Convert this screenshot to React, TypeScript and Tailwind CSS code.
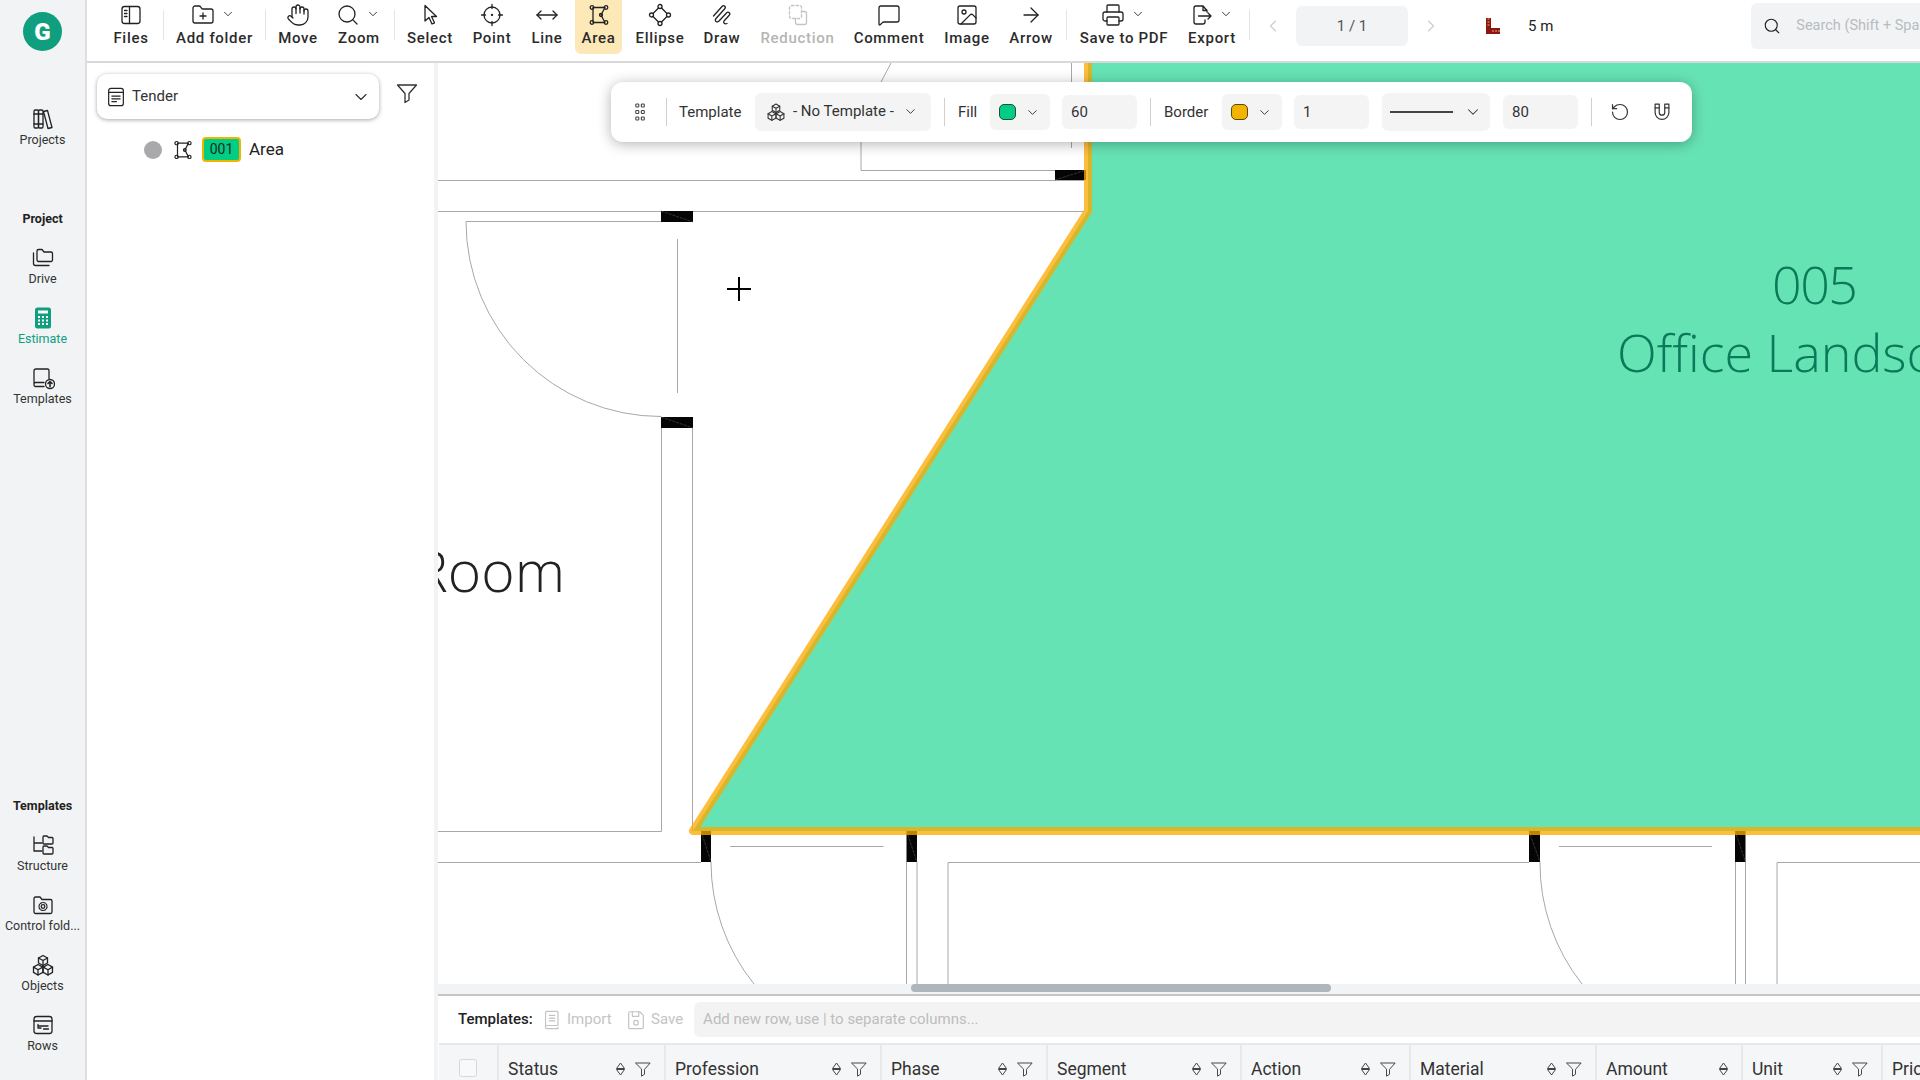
import React from 'react';
import { ChevronDown, ChevronLeft, ChevronRight, Search, Hand, MoveHorizontal, ArrowRight, Printer, FolderPlus, RotateCcw, Image as ImageIcon, MessageSquare } from 'lucide-react';

const ui = "font-['Roboto',sans-serif]";

// generic stroke icon wrapper
function Ico({ size = 24, children, className = '' }: { size?: number; children: React.ReactNode; className?: string }) {
  return (
    <svg width={size} height={size} viewBox="0 0 24 24" fill="none" stroke="currentColor" strokeWidth={1.3} strokeLinecap="round" strokeLinejoin="round" className={className}>
      {children}
    </svg>
  );
}

const FilesIcon = () => (
  <Ico>
    <rect x="3" y="3.5" width="18" height="17" rx="2.5" />
    <path d="M10.5 3.5v17M5.5 7.5h2.5M5.5 10.5h2.5M5.5 13.5h2.5" />
  </Ico>
);
const SelectIcon = () => (
  <Ico>
    <path d="M7 2.500v15.500l4-3.500 3 6.500 2.500-1.200-3-6.300h5z" />
  </Ico>
);
const PointIcon = () => (
  <Ico>
    <circle cx="12" cy="12" r="8" />
    <path d="M12 1.500v4M12 18.500v4M1.500 12h4M18.500 12h4" />
    <circle cx="12" cy="12" r="0.5" fill="currentColor" />
  </Ico>
);
const AreaIcon = ({ size = 24 }: { size?: number }) => (
  <Ico size={size}>
    <path d="M6 4.500h12l-4 7.500 4 7.500H6z" />
    <circle cx="5" cy="4.500" r="1.800" />
    <circle cx="19" cy="4.500" r="1.800" />
    <circle cx="5" cy="19.500" r="1.800" />
    <circle cx="19" cy="19.500" r="1.800" />
    <circle cx="14" cy="12" r="1.500" />
  </Ico>
);
const EllipseIcon = () => (
  <Ico>
    <path d="M12 3.500 20.500 12 12 20.500 3.500 12z" />
    <circle cx="12" cy="3.500" r="2" fill="white" />
    <circle cx="12" cy="20.500" r="2" fill="white" />
    <circle cx="3.500" cy="12" r="2" fill="white" />
    <circle cx="20.500" cy="12" r="2" fill="white" />
  </Ico>
);
const DrawIcon = () => (
  <Ico>
    <path d="M3.500 13 12 3.500c2-2 4.500.5 2.500 2.500L6 15.500c-2 2.500 1 4.500 3 2.500l7.500-8c2-2 4.500.5 2.500 2.500l-5 5.500c-1 1.500.5 3.500 3 2.500" />
  </Ico>
);
const ReductionIcon = () => (
  <Ico>
    <rect x="3.500" y="2.500" width="12" height="13" rx="2" strokeDasharray="2.500 2" />
    <path d="M15.500 8.500h3a2 2 0 0 1 2 2v9a2 2 0 0 1-2 2h-7a2 2 0 0 1-2-2v-4" />
  </Ico>
);
const ExportIcon = () => (
  <Ico>
    <path d="M14 3H7a2 2 0 0 0-2 2v14a2 2 0 0 0 2 2h7a2 2 0 0 0 2-2v-2M14 3l4 4.500V9M14 3v4.500h4M9.500 13H22M19 10l3 3-3 3" />
  </Ico>
);
const ProjectsIcon = () => (
  <Ico>
    <rect x="3" y="3" width="4.500" height="18" rx="1.200" />
    <rect x="7.500" y="3" width="4.500" height="18" rx="1.200" />
    <path d="M3 17h9M3 7h9M12.500 4.500l4-1 4.500 17-4 1z" />
  </Ico>
);
const DriveIcon = () => (
  <Ico>
    <path d="M6 7.500V5a1.500 1.500 0 0 1 1.500-1.500h3.500l2 2.500h7a1.500 1.500 0 0 1 1.500 1.500v6.500a1.500 1.500 0 0 1-1.500 1.500H7.500A1.500 1.500 0 0 1 6 14z" />
    <path d="M2.500 7v10.500a2 2 0 0 0 2 2H18" />
  </Ico>
);
const EstimateIcon = () => (
  <svg width="24" height="24" viewBox="0 0 24 24">
    <rect x="4" y="1.500" width="16" height="21" rx="2.500" fill="#0f9f7f" />
    <rect x="7" y="4.500" width="10" height="3" fill="white" />
    {[10, 13.5, 17].map((y) => [7, 11, 15].map((x) => <rect key={`${x}${y}`} x={x} y={y} width="2" height="2" fill="white" />))}
  </svg>
);
const TemplatesUpIcon = () => (
  <Ico>
    <path d="M13 20.500H4.500A1.500 1.500 0 0 1 3 19V5a2 2 0 0 1 2-2h11.500a1.500 1.500 0 0 1 1.500 1.500v8M3 18a1.500 1.500 0 0 1 1.500-1.500H13" />
    <circle cx="19" cy="18" r="4.500" />
    <path d="M19 20.500v-5M17 17.500l2-2 2 2" strokeWidth={1.6} />
  </Ico>
);
const StructureIcon = () => (
  <Ico>
    <path d="M3 4v14h8M3 10h8" />
    <path d="M12 5V4a1 1 0 0 1 1-1h3l1.500 1.500h3.500a1 1 0 0 1 1 1V10a1 1 0 0 1-1 1h-8a1 1 0 0 1-1-1z" />
    <path d="M12 15v-1a1 1 0 0 1 1-1h3l1.500 1.500h3.500a1 1 0 0 1 1 1V20a1 1 0 0 1-1 1h-8a1 1 0 0 1-1-1z" />
  </Ico>
);
const ControlIcon = () => (
  <Ico>
    <path d="M3 5.500A1.500 1.500 0 0 1 4.500 4H9l2 2.500h8.500A1.500 1.500 0 0 1 21 8v11a1.500 1.500 0 0 1-1.500 1.500h-15A1.500 1.500 0 0 1 3 19z" />
    <circle cx="12" cy="13.500" r="1.800" />
    <circle cx="12" cy="13.500" r="4" strokeDasharray="2 1.100" strokeWidth={1.2} />
  </Ico>
);
const ObjectsIcon = ({ size = 24 }: { size?: number }) => (
  <Ico size={size}>
    <path d="M12 2.500l4.500 2.500v5L12 12.500 7.500 10V5z" />
    <path d="M7.500 5l4.500 2.500L16.500 5M12 7.500v5" />
    <path d="M7 11.500l4.800 2.600v5.300L7 22l-4.500-2.600v-5.300z" />
    <path d="M2.500 14.100L7 16.700l4.800-2.600M7 16.700V22" />
    <path d="M17 11.500l4.500 2.600v5.300L17 22l-4.800-2.600v-5.300z" />
    <path d="M12.200 14.100l4.800 2.600 4.500-2.600M17 16.700V22" />
  </Ico>
);
const RowsIcon = () => (
  <Ico>
    <rect x="3" y="3.500" width="18" height="17" rx="2.500" />
    <path d="M3 8h18M7 11.500v3.500h3M7 13h10M12.500 16h5" />
  </Ico>
);
const TenderIcon = () => (
  <Ico size={22}>
    <rect x="4" y="2.500" width="16" height="19" rx="2.500" />
    <path d="M4 7h16M7.500 11h9M7.500 14h9M7.500 17h5" />
  </Ico>
);
const FilterIcon = ({ size = 24, className = '' }: { size?: number; className?: string }) => (
  <Ico size={size} className={className}>
    <path d="M2.500 4h19l-7.500 8.500v6.500l-4 2.500v-9z" />
  </Ico>
);
const BookIcon = () => (
  <Ico size={22}>
    <path d="M5 19.500V4a1.500 1.500 0 0 1 1.500-1.500H17A1.500 1.500 0 0 1 18.500 4v14H6.500a1.500 1.500 0 0 0 0 3.500H18.500v-1.500" />
    <path d="M9 7h6M9 10h6M9 13h6" />
  </Ico>
);
const SaveIcon = () => (
  <Ico size={22}>
    <path d="M5 3h11l4 4v13a1.500 1.500 0 0 1-1.500 1.500h-13A1.500 1.500 0 0 1 4 20V4.500A1.500 1.500 0 0 1 5 3z" />
    <path d="M8 3v5h7V3" />
    <circle cx="12" cy="15" r="2.500" />
  </Ico>
);
const MagnetIcon = () => (
  <Ico size={22} className="ml-[21px] text-[#333]">
    <path d="M4.500 3.500h4.500v9a3 3 0 0 0 6 0v-9h4.500v9a7.500 7.500 0 0 1-15 0z" />
    <path d="M4.500 7.500H9M15 7.500h4.500" />
  </Ico>
);
const SortIcon = () => (
  <svg width="11" height="14" viewBox="0 0 11 14" fill="none" stroke="#444" strokeWidth="1" strokeLinejoin="round">
    <path d="M5.500 1 9.500 6.500H1.500z" />
    <path d="M5.500 13 9.500 7.500H1.500z" />
  </svg>
);

function Tool({ label, w, children, chevron, active, disabled, mr }: { label: string; w: string; children: React.ReactNode; chevron?: boolean; active?: boolean; disabled?: boolean; mr?: string }) {
  return (
    <div className={`${w} ${mr ?? ''} h-[54px] flex flex-col items-center shrink-0 ${active ? 'bg-[#fde8b8] rounded-b-md' : ''}`}>
      <div className={`h-[30px] flex items-center justify-center gap-[6px] ${disabled ? 'text-[#c4c4c4]' : 'text-[#222]'} ${chevron ? '-ml-[3px]' : ''}`}>
        {children}
        {chevron && <ChevronDown size={14} strokeWidth={1.5} className="mb-[3px]" />}
      </div>
      <span className={`text-[15px] leading-[16px] font-medium tracking-[0.7px] whitespace-nowrap ${disabled ? 'text-[#b5b5b5]' : 'text-[#2b2b2b]'}`}>{label}</span>
    </div>
  );
}

const Sep = () => <div className="w-[1px] h-[30px] bg-[#e3e5e8] shrink-0 self-start mt-[10px]" />;

function TopBar() {
  const s = { size: 24, strokeWidth: 1.3 };
  return (
    <div className="h-[63px] shrink-0 flex items-start bg-white border-b-2 border-[#d9d9d9] pl-[12px] overflow-hidden">
      <Tool label="Files" w="w-[64px]"><FilesIcon /></Tool>
      <Sep />
      <Tool label="Add folder" w="w-[101px]" chevron><FolderPlus {...s} /></Tool>
      <Sep />
      <Tool label="Move" w="w-[64px]"><Hand {...s} /></Tool>
      <Tool label="Zoom" w="w-[58px]" mr="mr-[6px]" chevron><Search {...s} /></Tool>
      <Sep />
      <Tool label="Select" w="w-[70px]"><SelectIcon /></Tool>
      <Tool label="Point" w="w-[54px]"><PointIcon /></Tool>
      <Tool label="Line" w="w-[56px]"><MoveHorizontal {...s} /></Tool>
      <Tool label="Area" w="w-[47px]" active><AreaIcon /></Tool>
      <Tool label="Ellipse" w="w-[76px]"><EllipseIcon /></Tool>
      <Tool label="Draw" w="w-[48px]"><DrawIcon /></Tool>
      <Tool label="Reduction" w="w-[103px]" disabled><ReductionIcon /></Tool>
      <Tool label="Comment" w="w-[80px]"><MessageSquare {...s} /></Tool>
      <Tool label="Image" w="w-[76px]"><ImageIcon {...s} /></Tool>
      <Tool label="Arrow" w="w-[52px]" mr="mr-[9px]"><ArrowRight {...s} /></Tool>
      <Sep />
      <Tool label="Save to PDF" w="w-[114px]" chevron><Printer {...s} /></Tool>
      <Tool label="Export" w="w-[62px]" mr="mr-[6px]" chevron><ExportIcon /></Tool>
      <Sep />
      <div className="w-[46px] h-[52px] flex items-center justify-center shrink-0"><ChevronLeft size={20} strokeWidth={1.3} className="text-[#c8ccd0]" /></div>
      <div className="w-[112px] h-[40px] mt-[6px] bg-[#f1f3f5] rounded-md flex items-center justify-center text-[15px] text-[#555] shrink-0">1 / 1</div>
      <div className="w-[46px] h-[52px] flex items-center justify-center shrink-0"><ChevronRight size={20} strokeWidth={1.3} className="text-[#c8ccd0]" /></div>
      <div className="ml-[31px] h-[52px] flex items-center shrink-0">
        <svg width="16" height="16" viewBox="0 0 16 16">
          <path d="M1 0h5v10h9v6H1z" fill="#8f1511" />
          <path d="M1.500 2h2M1.500 5h2M1.500 8h2M7 13v2M10 13v2M13 13v2" stroke="#e9b56a" strokeWidth="1" transform="translate(1 -1)" />
        </svg>
      </div>
      <div className="ml-[27px] h-[52px] flex items-center text-[15px] text-[#222] shrink-0">5 m</div>
      <div className="ml-[198px] mt-[3px] h-[46px] w-[180px] shrink-0 bg-[#f1f3f5] rounded-l-md flex items-center pl-[12px] gap-[15px] overflow-hidden">
        <Search size={18} strokeWidth={1.5} className="text-[#222] shrink-0" />
        <span className="text-[14.5px] text-[#b8bcc0] whitespace-nowrap">Search (Shift + Space)</span>
      </div>
    </div>
  );
}

function RailItem({ label, children, active }: { label: string; children: React.ReactNode; active?: boolean }) {
  return (
    <div className="h-[60px] flex flex-col items-center justify-center shrink-0">
      <div className={`h-[24px] ${active ? '' : 'text-[#222]'}`}>{children}</div>
      <span className={`mt-[2px] text-[12.5px] leading-[14px] whitespace-nowrap ${active ? 'text-[#0f9f7f]' : 'text-[#333]'}`}>{label}</span>
    </div>
  );
}

function Rail() {
  return (
    <div className="w-[87px] shrink-0 h-full bg-[#f1f3f5] border-r-2 border-[#dcdee0] flex flex-col items-stretch">
      <div className="pt-[12px] flex justify-center h-[97px] shrink-0">
        <div className="w-[39px] h-[39px] rounded-full bg-[#0f9f7f] flex items-center justify-center text-white text-[24px] font-black leading-none">G</div>
      </div>
      <RailItem label="Projects"><ProjectsIcon /></RailItem>
      <div className="mt-[54px] mb-[9px] text-[12.5px] leading-[16px] font-bold text-center text-[#222]">Project</div>
      <RailItem label="Drive"><DriveIcon /></RailItem>
      <RailItem label="Estimate" active><EstimateIcon /></RailItem>
      <RailItem label="Templates"><TemplatesUpIcon /></RailItem>
      <div className="mt-auto mb-[9px] text-[12.5px] leading-[16px] font-bold text-center text-[#222]">Templates</div>
      <RailItem label="Structure"><StructureIcon /></RailItem>
      <RailItem label="Control fold..."><ControlIcon /></RailItem>
      <RailItem label="Objects"><ObjectsIcon /></RailItem>
      <div className="pb-[17px]"><RailItem label="Rows"><RowsIcon /></RailItem></div>
    </div>
  );
}

function SidePanel() {
  return (
    <div className="w-[351px] shrink-0 h-full bg-white border-r-4 border-[#f1f3f5] pl-[10px]">
      <div className="flex items-center mt-[11px]">
        <div className="w-[282px] h-[45px] rounded-[10px] bg-white shadow-[0_1px_4px_rgba(0,0,0,0.35)] flex items-center pl-[8px] pr-[8px]">
          <span className="text-[#222] mr-[5px]"><TenderIcon /></span>
          <span className="text-[15px] text-[#333] flex-1">Tender</span>
          <ChevronDown size={20} strokeWidth={1.4} className="text-[#333]" />
        </div>
        <FilterIcon size={24} className="ml-[16px] mb-[7px] text-[#333]" />
      </div>
      <div className="flex items-center mt-[18px] ml-[47px]">
        <div className="w-[18px] h-[18px] rounded-full bg-[#a9a9ab]" />
        <span className="ml-[10px] text-[#222]"><AreaIcon size={22} /></span>
        <div className="ml-[8px] w-[39px] h-[25px] rounded-[4px] bg-[#00ce84] border-2 border-[#f3b400] flex items-center justify-center text-[14px] text-[#1a2a24]">001</div>
        <span className="ml-[8px] text-[17px] text-[#222]">Area</span>
      </div>
    </div>
  );
}

function Block({ x, y, w, h, flip }: { x: number; y: number; w: number; h: number; flip?: boolean }) {
  return (
    <g>
      <rect x={x} y={y} width={w} height={h} fill="#050505" />
      <path d={flip ? `M${x} ${y + h}L${x + w} ${y}` : `M${x} ${y}L${x + w} ${y + h}`} stroke="#555" strokeWidth="0.6" strokeDasharray="3 1" />
    </g>
  );
}

// floor plan, viewBox uses page coordinates
function FloorPlan() {
  const lines = [
    'M438 180.500H1084', 'M438 211.500H1084',
    'M861 142V170.500H1056', 'M1071.500 63V84M1071.500 142V148', 'M891 63L881 82', 'M861 142L863 136',
    'M466 221.500H661', 'M466 221.500A195 195 0 0 0 661 416.500',
    'M677.500 239V393',
    'M661.500 428V831.500', 'M692.500 428V831',
    'M438 831.500H661.500', 'M438 862.500H701',
    'M730 846.500H883.500', 'M711 862A195 195 0 0 0 754 984',
    'M906.500 862V984', 'M917 862V984', 'M948 984V862.500H1529',
    'M1559 846.500H1712', 'M1540 862A195 195 0 0 0 1582 984',
    'M1735.500 862V984', 'M1745.500 862V984', 'M1777 984V862.500H1920',
  ];
  return (
    <svg className="absolute inset-0" width="1482" height="921" viewBox="438 63 1482 921">
      <g fill="none" stroke="#a8a8a8" strokeWidth="1">
        {lines.map((d) => <path key={d} d={d} />)}
      </g>
      <Block x={1055} y={170} w={31} h={10} flip />
      <Block x={661} y={211} w={32} h={11} />
      <Block x={661} y={417} w={32} h={11} />
      <Block x={701} y={831} w={10} h={31} />
      <Block x={906.5} y={831} w={10.5} h={31} />
      <Block x={1529} y={831} w={11} h={31} />
      <Block x={1735} y={831} w={10.5} h={31} />
      <path d="M1088 40V211L693 831H1950V40Z" fill="#66e3b5" stroke="#fca800" strokeOpacity="0.76" strokeWidth="8" strokeLinejoin="round" />
      <path d="M739 277V301M727 289H751" stroke="#000" strokeWidth="2" />
    </svg>
  );
}

const Pill = ({ className, children }: { className: string; children?: React.ReactNode }) => (
  <div className={`bg-[#f4f4f5] rounded-md flex items-center shrink-0 text-[15px] text-[#333] ${className}`}>{children}</div>
);
const VBar = ({ className = '' }: { className?: string }) => <div className={`w-[1px] h-[28px] bg-[#d0d0d0] shrink-0 ${className}`} />;

function AreaToolbar() {
  return (
    <div className={`absolute left-[173px] top-[19px] w-[1081px] h-[60px] bg-white rounded-[12px] shadow-[0_2px_14px_rgba(0,0,0,0.3)] flex items-center text-[15px] text-[#333] pl-[24px] ${ui}`}>
      <svg width="10" height="18" viewBox="0 0 10 18" fill="none" stroke="#444" strokeWidth="1.1" className="shrink-0">
        {[1, 7.5, 14].map((y) => [0.8, 6.3].map((x) => <rect key={`${x}${y}`} x={x} y={y} width="3" height="3" rx="0.8" />))}
      </svg>
      <VBar className="ml-[21px]" />
      <span className="ml-[12px] w-[76px]">Template</span>
      <Pill className="w-[176px] h-[38px] pl-[11px]">
        <ObjectsIcon size={20} />
        <span className="ml-[7px] mb-[2px] whitespace-nowrap">- No Template -</span>
        <ChevronDown size={15} strokeWidth={1.5} className="ml-[9px] mb-[2px]" />
      </Pill>
      <VBar className="ml-[13px]" />
      <span className="ml-[13px] w-[32px]">Fill</span>
      <Pill className="w-[60px] h-[36px] pl-[9px]">
        <div className="w-[17px] h-[16px] rounded-[5px] bg-[#00ce84] border border-[#2a4a3c]" />
        <ChevronDown size={15} strokeWidth={1.5} className="ml-[9px]" />
      </Pill>
      <Pill className="ml-[12px] w-[75px] h-[34px] pl-[9px]">60</Pill>
      <VBar className="ml-[13px]" />
      <span className="ml-[13px] w-[58px]">Border</span>
      <Pill className="w-[60px] h-[36px] pl-[9px]">
        <div className="w-[17px] h-[16px] rounded-[5px] bg-[#f3b400] border border-[#5a4a10]" />
        <ChevronDown size={15} strokeWidth={1.5} className="ml-[9px]" />
      </Pill>
      <Pill className="ml-[12px] w-[75px] h-[34px] pl-[9px]">1</Pill>
      <Pill className="ml-[13px] w-[108px] h-[38px] pl-[8px]">
        <div className="w-[63px] h-[2px] bg-[#444]" />
        <ChevronDown size={18} strokeWidth={1.4} className="ml-[11px]" />
      </Pill>
      <Pill className="ml-[13px] w-[75px] h-[34px] pl-[9px]">80</Pill>
      <VBar className="ml-[13px]" />
      <RotateCcw size={20} strokeWidth={1.4} className="ml-[18px] text-[#333]" />
      <MagnetIcon />
    </div>
  );
}

function Canvas() {
  return (
    <div className="relative flex-1 bg-white overflow-hidden">
      <FloorPlan />
      <div className="absolute left-[-24px] top-[471px] text-[57px] leading-[72px] text-[#222] font-light font-['Open_Sans',sans-serif] whitespace-nowrap">Room</div>
      <div className="absolute left-[1179px] top-[187px] w-[400px] text-[52px] leading-[68px] text-[#0b7a58] font-light font-['Open_Sans',sans-serif] whitespace-nowrap">
        <div className="ml-[155px] tracking-[-1.5px]">005</div>
        <div>Office Landscape</div>
      </div>
      <AreaToolbar />
    </div>
  );
}

const columns = [
  { name: 'Status', w: 'w-[167px]', filter: true },
  { name: 'Profession', w: 'w-[216px]', filter: true },
  { name: 'Phase', w: 'w-[166px]', filter: true },
  { name: 'Segment', w: 'w-[194px]', filter: true },
  { name: 'Action', w: 'w-[169px]', filter: true },
  { name: 'Material', w: 'w-[186px]', filter: true },
  { name: 'Amount', w: 'w-[146px]', filter: false },
  { name: 'Unit', w: 'w-[140px]', filter: true },
  { name: 'Price', w: 'w-[160px]', filter: true },
];

function BottomPanel() {
  return (
    <div className="h-[86px] shrink-0 bg-white border-t-2 border-[#c4c6c8] overflow-hidden">
      <div className="h-[47px] flex items-center pl-[20px]">
        <span className="text-[15px] font-medium text-[#222] w-[83px]">Templates:</span>
        <span className="text-[#c4c4c4]"><BookIcon /></span>
        <span className="ml-[4px] text-[15px] text-[#c4c4c4] w-[58px]">Import</span>
        <span className="text-[#c4c4c4]"><SaveIcon /></span>
        <span className="ml-[4px] text-[15px] text-[#c4c4c4]">Save</span>
        <div className="ml-[11px] flex-1 h-[35px] bg-[#f3f3f3] rounded-l-md flex items-center pl-[9px] text-[15px] text-[#bdbdbd]">Add new row, use | to separate columns...</div>
      </div>
      <div className="flex h-[60px] ml-[1px] bg-[#f5f6f7] border-t-2 border-[#e6e8ea]">
        <div className="w-[58px] shrink-0 flex items-start justify-center pt-[14px]">
          <div className="w-[18px] h-[18px] rounded-[3px] border border-[#d5d8dc] bg-[#f8f9fa]" />
        </div>
        {columns.map((c) => (
          <div key={c.name} className={`${c.w} shrink-0 border-l-2 border-[#e6e8ea] flex items-start pl-[9px] pr-[11px] pt-[12px]`}>
            <span className="text-[17.5px] leading-[24px] text-[#333] flex-1">{c.name}</span>
            <div className="flex items-center gap-[8px] h-[24px] mr-[1px]">
              <SortIcon />
              {c.filter && <FilterIcon size={18} className="text-[#444]" />}
            </div>
          </div>
        ))}
      </div>
    </div>
  );
}

export default function App() {
  return (
    <div className={`w-[1920px] h-[1080px] flex overflow-hidden bg-white ${ui}`}>
      <Rail />
      <div className="flex-1 min-w-0 flex flex-col">
        <TopBar />
        <div className="flex-1 min-h-0 flex">
          <SidePanel />
          <div className="flex-1 min-w-0 flex flex-col">
            <Canvas />
            <div className="h-[10px] shrink-0 bg-[#f1f3f5] pl-[473px]">
              <div className="w-[420px] h-[8px] rounded-full bg-[#adb5bd]" />
            </div>
            <BottomPanel />
          </div>
        </div>
      </div>
    </div>
  );
}
